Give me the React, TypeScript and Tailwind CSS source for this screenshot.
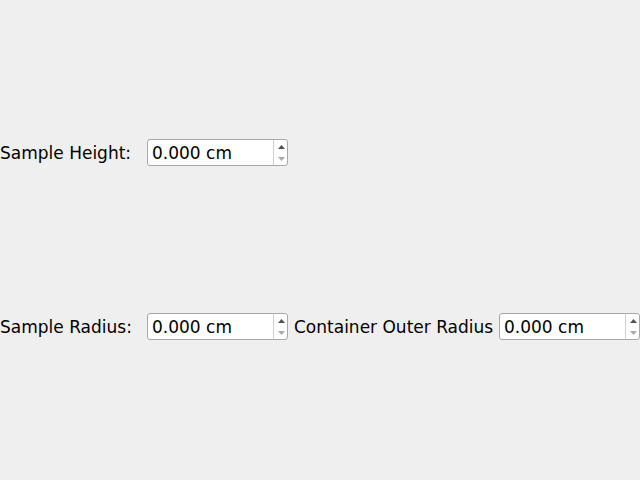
import React from 'react'

function SpinBox({ value }: { value: string }) {
  return (
    <div className="flex h-[27px] w-[141px] shrink-0 rounded-[3px] border border-[#a9a9a9] bg-white">
      <div className="flex flex-1 items-center pl-[4px] pt-[1px] text-[17px] leading-[22px] text-black">{value}</div>
      <div className="flex w-[14px] flex-col items-center justify-center gap-[8px] border-l border-[#d0d0d0] pl-[1px]">
        <svg width="7" height="4" viewBox="0 0 7 4">
          <path d="M0 4 L3.5 0 L7 4 Z" fill="#505050" />
        </svg>
        <svg width="7" height="4" viewBox="0 0 7 4">
          <path d="M0 0 L7 0 L3.5 4 Z" fill="#aaaaaa" />
        </svg>
      </div>
    </div>
  )
}

export default function App() {
  return (
    <div
      className="flex h-[480px] w-[640px] flex-col gap-[147px] bg-[#efefef] pt-[139px] text-[17px] text-black"
      style={{ fontFamily: '"DejaVu Sans", sans-serif' }}
    >
      <div className="flex h-[27px] items-center">
        <span className="w-[147px] shrink-0 pt-[1px] leading-[22px]">Sample Height:</span>
        <SpinBox value="0.000 cm" />
      </div>
      <div className="flex h-[27px] items-center">
        <span className="w-[147px] shrink-0 pt-[1px] leading-[22px]">Sample Radius:</span>
        <SpinBox value="0.000 cm" />
        <span className="ml-[6px] w-[205px] shrink-0 whitespace-nowrap pt-[1px] leading-[22px]">Container Outer Radius</span>
        <SpinBox value="0.000 cm" />
      </div>
    </div>
  )
}
